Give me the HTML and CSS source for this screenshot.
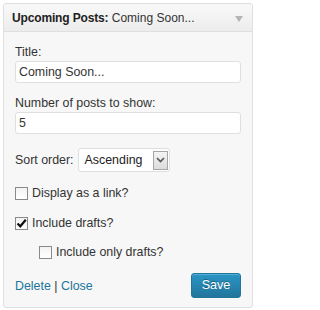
FILE: index.html
```html
<!DOCTYPE html>
<html>
<head>
<meta charset="utf-8">
<link rel="stylesheet" href="styles.css">
</head>
<body>
<div class="widget">
  <div class="widget-top">
    <div class="widget-title"><strong>Upcoming Posts:</strong> <span class="in-title">Coming Soon...</span></div>
    <span class="arrow"></span>
  </div>
  <div class="widget-inside">
    <label class="lbl">Title:</label>
    <div class="input">Coming Soon...</div>
    <label class="lbl lbl-2">Number of posts to show:</label>
    <div class="input">5</div>
    <div class="sort-row">
      <span>Sort order:</span>
      <div class="select">
        <span class="select-text">Ascending</span>
        <span class="select-btn"><svg width="9" height="6" viewBox="0 0 9 6"><path d="M1 1 L4.5 4.5 L8 1" fill="none" stroke="#555" stroke-width="1.6"/></svg></span>
      </div>
    </div>
    <div class="check-row row-1"><span class="cb"></span><span>Display as a link?</span></div>
    <div class="check-row row-2"><span class="cb"><svg width="11" height="11" viewBox="0 0 11 11"><path d="M1.5 5.5 L4.3 8.3 L9.8 1.8" fill="none" stroke="#111" stroke-width="2.2"/></svg></span><span>Include drafts?</span></div>
    <div class="check-row row-3 indent"><span class="cb"></span><span>Include only drafts?</span></div>
    <div class="footer">
      <div class="links"><a>Delete</a> | <a>Close</a></div>
      <div class="save">Save</div>
    </div>
  </div>
</div>
</body>
</html>
```
FILE: styles.css
```css
html, body { margin: 0; padding: 0; background: #fff; }
body {
  font-family: "Liberation Sans", Arial, sans-serif;
  font-size: 12.4px;
  color: #333;
}
.widget {
  margin: 3px 0 0 3px;
  width: 248px;
  border: 1px solid #dfdfdf;
  border-radius: 3px;
  background: #f7f7f7;
  box-shadow: inset 0 1px 0 #fff;
}
.widget-top {
  height: 27px;
  display: flex;
  align-items: center;
  justify-content: space-between;
  padding: 0 9px 0 8px;
  background: linear-gradient(#f9f9f9, #ececec);
  border-bottom: 1px solid #dfdfdf;
  border-radius: 3px 3px 0 0;
}
.widget-title { color: #222; line-height: 16px; padding-top: 1px; font-size: 12px; }
.widget-title strong { font-weight: bold; color: #222; letter-spacing: -0.15px; }
.in-title { color: #333; }
.arrow {
  width: 0; height: 0;
  border-left: 4px solid transparent;
  border-right: 4px solid transparent;
  border-top: 6px solid #b4b4b4;
  margin-top: 2px;
}
.widget-inside {
  padding: 12px 11px 0 11px;
  height: 275px;
  box-sizing: border-box;
}
.lbl { display: block; line-height: 16px; }
.lbl-2 { margin-top: 12px; }
.input {
  margin-top: 1px;
  height: 20px;
  border: 1px solid #dfdfdf;
  border-radius: 3px;
  background: #fff;
  line-height: 20px;
  padding-left: 3px;
  box-sizing: content-box;
  width: 221px;
  color: #333;
}
.sort-row {
  margin-top: 14px;
  display: flex;
  align-items: center;
  gap: 4px;
  height: 24px;
}
.select {
  width: 83px;
  height: 22px;
  border: 1px solid #dfdfdf;
  border-radius: 3px;
  background: #fff;
  display: flex;
  align-items: center;
  justify-content: space-between;
  padding: 0 1px 0 6px;
}
.select-text { color: #222; }
.select-btn {
  width: 13px;
  height: 17px;
  border: 1px solid #a6a6a6;
  background: linear-gradient(#f4f4f4, #dcdcdc);
  display: flex;
  align-items: center;
  justify-content: center;
}
.check-row {
  display: flex;
  align-items: center;
  height: 16px;
  line-height: 16px;
}
.row-1 { margin-top: 13px; }
.row-2 { margin-top: 14px; }
.row-3 { margin-top: 13px; }
.indent { padding-left: 24px; }
.cb {
  width: 11px;
  height: 11px;
  border: 1px solid #8a8a8a;
  background: linear-gradient(#f3f3f3, #fff);
  margin-right: 4px;
  display: flex;
  align-items: center;
  justify-content: center;
}
.footer {
  margin-top: 13px;
  display: flex;
  align-items: center;
  justify-content: space-between;
  height: 25px;
}
.links { color: #333; }
.links a { color: #21759b; text-decoration: none; }
.save {
  width: 48px;
  height: 23px;
  line-height: 22px;
  text-align: center;
  color: #fff;
  font-size: 12.6px;
  background: linear-gradient(#2a95c5, #21759b);
  border: 1px solid #21759b;
  border-radius: 3px;
  text-shadow: 0 -1px 0 rgba(0,0,0,0.3);
  box-shadow: inset 0 1px 0 rgba(120,200,230,0.5);
}
```
